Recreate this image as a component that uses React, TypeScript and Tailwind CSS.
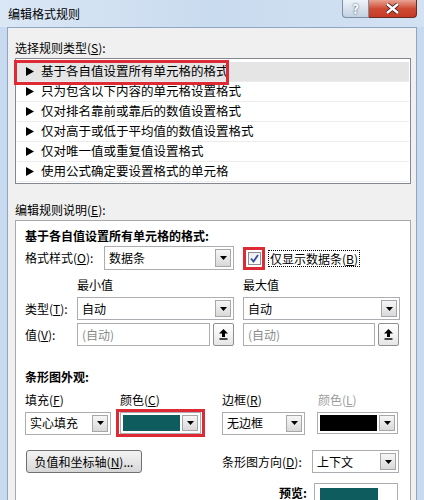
import React from "react";

const FONT = { fontFamily: '"Microsoft YaHei", "Noto Sans CJK SC", "Noto Sans", sans-serif' };

function DropBtn() {
  return (
    <div className="w-[16px] self-stretch my-[2px] mr-[2px] border border-[#a7a7a7] bg-gradient-to-b from-[#f6f6f6] to-[#d9d9d9] flex items-center justify-center">
      <svg width="7" height="4" viewBox="0 0 7 4">
        <path d="M0 0h7L3.5 4z" fill="#000" />
      </svg>
    </div>
  );
}

function Combo({ text, w, h = "h-[23px]" }: { text: string; w: string; h?: string }) {
  return (
    <div className={`${w} ${h} border border-[#abadb3] bg-white flex items-center`}>
      <span className="flex-1 pl-[4px] leading-none">{text}</span>
      <DropBtn />
    </div>
  );
}

function Swatch({ color, w }: { color: string; w: string }) {
  return (
    <div className={`${w} h-[22px] border border-[#abadb3] bg-white flex items-center`}>
      <div className="flex-1 self-stretch m-[2px]" style={{ background: color }} />
      <DropBtn />
    </div>
  );
}

function UpBtn() {
  return (
    <div className="w-[21px] h-[23px] border border-[#8e8f8f] rounded-[2px] bg-gradient-to-b from-white to-[#e6e6e6] flex items-center justify-center">
      <svg width="9" height="11" viewBox="0 0 9 11">
        <path d="M4.5 0L9 4.5H6V8H3V4.5H0z" fill="#000" />
        <rect x="0.5" y="9.3" width="8" height="1.4" fill="#000" />
      </svg>
    </div>
  );
}

function Tri() {
  return (
    <svg width="8" height="9" viewBox="0 0 8 9" className="mr-[7px]">
      <path d="M0 0L8 4.5L0 9z" fill="#000" />
    </svg>
  );
}

const rules = [
  "基于各自值设置所有单元格的格式",
  "只为包含以下内容的单元格设置格式",
  "仅对排名靠前或靠后的数值设置格式",
  "仅对高于或低于平均值的数值设置格式",
  "仅对唯一值或重复值设置格式",
  "使用公式确定要设置格式的单元格",
];

export default function App() {
  return (
    <div className="w-[424px] h-[500px] overflow-hidden flex flex-col bg-[#c7daef] text-[12px] text-black" style={FONT}>
      {/* title bar */}
      <div className="h-[27px] shrink-0 flex items-start justify-between bg-gradient-to-r from-[#dae7f5] via-[#c9dbef] to-[#d3e2f3]">
        <span className="pl-[8px] pt-[6px] text-[12px] leading-[16px]">编辑格式规则</span>
        <div className="flex mr-[7px]">
          <div className="w-[27px] h-[18px] border border-[#7d8ea5] border-t-0 rounded-bl-[4px] bg-gradient-to-b from-[#eef3f9] to-[#c3d2e3] flex items-center justify-center text-white font-bold text-[13px] leading-none [text-shadow:0_0_2px_#24364d]">
            ?
          </div>
          <div className="w-[48px] h-[18px] border border-[#6b2a20] border-t-0 border-l-0 rounded-br-[4px] bg-gradient-to-b from-[#e8a293] via-[#cf4b35] to-[#c53a23] flex items-center justify-center">
            <svg width="13" height="11" viewBox="0 0 13 11">
              <path d="M1 1L12 10M12 1L1 10" stroke="#3a1a14" strokeWidth="4" />
              <path d="M1 1L12 10M12 1L1 10" stroke="#fff" strokeWidth="2.4" />
            </svg>
          </div>
        </div>
      </div>

      <div className="flex-1 flex">
        <div className="w-[7px] shrink-0" />
        <div className="flex-1 border border-[#8ea6c3] border-b-0 bg-[#f0f0f0] pl-[7px] pr-[5px] pt-[12px]">
          <div className="leading-[16px]">
            选择规则类型(<span className="underline">S</span>):
          </div>
          {/* listbox */}
          <div className="relative mt-[2px] h-[126px] border border-[#828790] bg-white pt-[3px] px-[1px] text-[12.5px]">
            {rules.map((r, i) => (
              <div
                key={r}
                className={`h-[20px] flex items-center pl-[9px] border-b border-[#ececec] ${i === 0 ? "bg-[#e5e5e5]" : ""}`}
              >
                <Tri />
                <span className="leading-none">{r}</span>
              </div>
            ))}
            <div className="absolute left-[-2px] top-[1px] w-[215px] h-[25px] border-[3px] border-[#de2a35]" />
          </div>

          <div className="mt-[18px] leading-[16px]">
            编辑规则说明(<span className="underline">E</span>):
          </div>
          {/* panel */}
          <div className="mt-[2px] h-[300px] border border-[#a9a9a9] bg-white pl-[9px] pt-[7px]">
            <div className="font-bold leading-[16px]">基于各自值设置所有单元格的格式:</div>

            <div className="mt-[2px] flex items-center h-[24px]">
              <span className="w-[79px]">
                格式样式(<span className="underline">O</span>):
              </span>
              <Combo text="数据条" w="w-[130px]" h="h-[24px]" />
              <div className="relative ml-[9px] w-[22px] h-[23px] border-[3px] border-[#de2a35] flex items-center justify-center">
                <div className="w-[13px] h-[13px] border border-[#8f8f8f] bg-gradient-to-br from-[#e9ecf1] to-white flex items-center justify-center">
                  <svg width="9" height="9" viewBox="0 0 9 9">
                    <path d="M1 4.5L3.5 7.5L8 1" fill="none" stroke="#2f4e9a" strokeWidth="1.8" />
                  </svg>
                </div>
              </div>
              <span className="ml-[3px] px-[1px] border border-dotted border-black leading-[15px]">
                仅显示数据条(<span className="underline">B</span>)
              </span>
            </div>

            <div className="mt-[7px] flex leading-[16px]">
              <span className="ml-[52px] w-[166px]">最小值</span>
              <span>最大值</span>
            </div>

            <div className="mt-[4px] flex items-center">
              <span className="w-[52px]">
                类型(<span className="underline">T</span>):
              </span>
              <Combo text="自动" w="w-[157px]" />
              <div className="ml-[9px]">
                <Combo text="自动" w="w-[157px]" />
              </div>
            </div>

            <div className="mt-[3px] flex items-center">
              <span className="w-[52px]">
                值(<span className="underline">V</span>):
              </span>
              <div className="w-[133px] h-[23px] border border-[#abadb3] bg-white flex items-center pl-[4px] text-[#8a8a8a]">(自动)</div>
              <div className="ml-[3px]">
                <UpBtn />
              </div>
              <div className="ml-[9px] w-[132px] h-[23px] border border-[#abadb3] bg-white flex items-center pl-[4px] text-[#8a8a8a]">(自动)</div>
              <div className="ml-[3px]">
                <UpBtn />
              </div>
            </div>

            <div className="mt-[23px] font-bold leading-[16px]">条形图外观:</div>

            <div className="mt-[7px] flex leading-[16px]">
              <span className="w-[95px]">
                填充(<span className="underline">F</span>)
              </span>
              <span className="w-[102px]">
                颜色(<span className="underline">C</span>)
              </span>
              <span className="w-[96px]">
                边框(<span className="underline">R</span>)
              </span>
              <span className="text-[#9d9d9d]">
                颜色(<span className="underline">L</span>)
              </span>
            </div>

            <div className="mt-[1px] flex items-center h-[28px]">
              <Combo text="实心填充" w="w-[86px]" h="h-[23px]" />
              <div className="relative ml-[5px] h-[28px] w-[89px] border-[3px] border-[#de2a35] flex items-center pl-[1px]">
                <Swatch color="#0f5c5f" w="w-[81px]" />
              </div>
              <div className="ml-[17px]">
                <Combo text="无边框" w="w-[83px]" h="h-[23px]" />
              </div>
              <div className="ml-[12px]">
                <Swatch color="#000" w="w-[81px]" />
              </div>
            </div>

            <div className="mt-[13px] flex items-center h-[23px]">
              <div className="ml-[1px] w-[116px] h-[23px] border border-[#707070] rounded-[3px] bg-gradient-to-b from-[#f3f3f3] via-[#e6e6e6] to-[#d6d6d6] flex items-center justify-center">
                负值和坐标轴(<span className="underline">N</span>)...
              </div>
              <span className="ml-[80px] w-[90px]">
                条形图方向(<span className="underline">D</span>):
              </span>
              <Combo text="上下文" w="w-[87px]" />
            </div>

            <div className="mt-[10px] flex items-start">
              <span className="w-[282px] text-right font-bold leading-[16px] pt-[2px]">预览:</span>
              <div className="ml-[7px] w-[84px] h-[24px] border border-[#abadb3] bg-white pt-[4px] pl-[5px]">
                <div className="w-[58px] h-[12px] bg-[#0f5c5f]" />
              </div>
            </div>
          </div>
        </div>
        <div className="w-[7px] shrink-0" />
      </div>
    </div>
  );
}
